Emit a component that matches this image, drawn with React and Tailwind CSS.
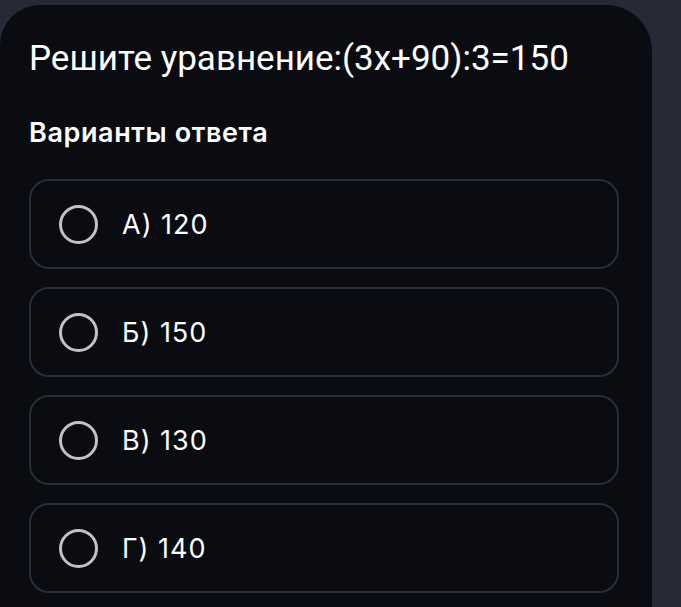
export default function App() {
  const options = ['А) 120', 'Б) 150', 'В) 130', 'Г) 140'];

  return (
    <div className="h-[607px] w-[681px] overflow-hidden bg-[#262a35] pt-[5px] font-['Inter',sans-serif]">
      <div className="h-[640px] w-[652px] rounded-tr-[46px] rounded-tl-[40px] bg-[#0a0c11] pl-[29px] pr-[33px] pt-[34px]">
        <h1 className="font-['Roboto',sans-serif] text-[35px] leading-[40px] text-white">
          Решите уравнение:(3x+90):3=150
        </h1>
        <h2 className="mt-[38px] text-[27px] font-semibold leading-[32px] tracking-[0.6px] text-white">Варианты ответа</h2>
        <div className="mt-[30px] flex flex-col gap-[18px]">
          {options.map((opt) => (
            <label
              key={opt}
              className="flex h-[90px] items-center gap-[24px] rounded-[20px] border-2 border-[#2a2d36] pl-[28px]"
            >
              <span className="h-[39px] w-[39px] rounded-full border-[3px] border-[#c2c2c6]" />
              <span className="text-[27px] leading-none tracking-[1px] text-white">{opt}</span>
            </label>
          ))}
        </div>
      </div>
    </div>
  );
}
